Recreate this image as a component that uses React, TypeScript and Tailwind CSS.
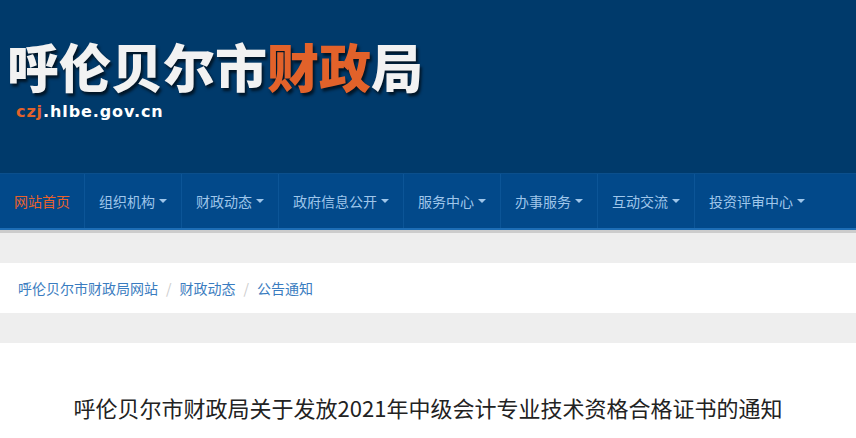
import { ChevronDown } from 'lucide-react';

const navItems = [
    { label: '网站首页', active: true },
    { label: '组织机构' },
    { label: '财政动态' },
    { label: '政府信息公开' },
    { label: '服务中心' },
    { label: '办事服务' },
    { label: '互动交流' },
    { label: '投资评审中心' },
];

function Caret() {
    return <span className="ml-[4px] inline-block w-0 h-0 border-l-[4px] border-r-[4px] border-t-[4px] border-l-transparent border-r-transparent border-t-[#9fc6ea] align-middle" />;
}

export default function App() {
    return (
        <div className="w-[856px] min-h-[438px] bg-white font-['Noto_Sans_CJK_SC',sans-serif]">
            {/* Header banner */}
            <div className="h-[173px] bg-[#003a6b] pl-[7px] pt-[34px]">
                <div className="text-[52px] leading-[64px] font-black text-[#f2f2f2] [text-shadow:2px_3px_3px_rgba(0,0,0,0.65)]">
                    呼伦贝尔市<span className="text-[#e2622a]">财政</span>局
                </div>
                <div className="mt-[2px] ml-[9px] font-['DejaVu_Sans',sans-serif] font-bold text-[16px] tracking-[0.9px] text-white">
                    <span className="text-[#e2622a]">czj</span>.hlbe.gov.cn
                </div>
            </div>

            {/* Main nav */}
            <div className="h-[57px] bg-[#02498a] border-t border-[#0b4f8c] border-b-2 border-b-[#1d6db5] flex">
                {navItems.map((item, i) => (
                    <div
                        key={item.label}
                        className={`flex items-center px-[14px] text-[14px] ${i < navItems.length - 1 ? 'border-r border-[#0c5597]' : ''} ${item.active ? 'text-[#e8612c]' : 'text-[#9fc6ea]'}`}
                    >
                        <span>{item.label}</span>
                        {!item.active && <Caret />}
                    </div>
                ))}
            </div>

            <div className="h-[3px] bg-[#cccccc]" />
            <div className="h-[30px] bg-[#eeeeee]" />

            {/* Breadcrumb */}
            <div className="h-[50px] bg-white flex items-center pl-[18px] text-[14px] text-[#3a7cc0]">
                <span>呼伦贝尔市财政局网站</span>
                <span className="px-[8px] text-[#cccccc]">/</span>
                <span>财政动态</span>
                <span className="px-[8px] text-[#cccccc]">/</span>
                <span>公告通知</span>
            </div>

            <div className="h-[30px] bg-[#eeeeee]" />

            {/* Article title */}
            <div className="pt-[49px] text-center text-[22px] leading-[30px] text-[#222222]">
                呼伦贝尔市财政局关于发放2021年中级会计专业技术资格合格证书的通知
            </div>
        </div>
    );
}
